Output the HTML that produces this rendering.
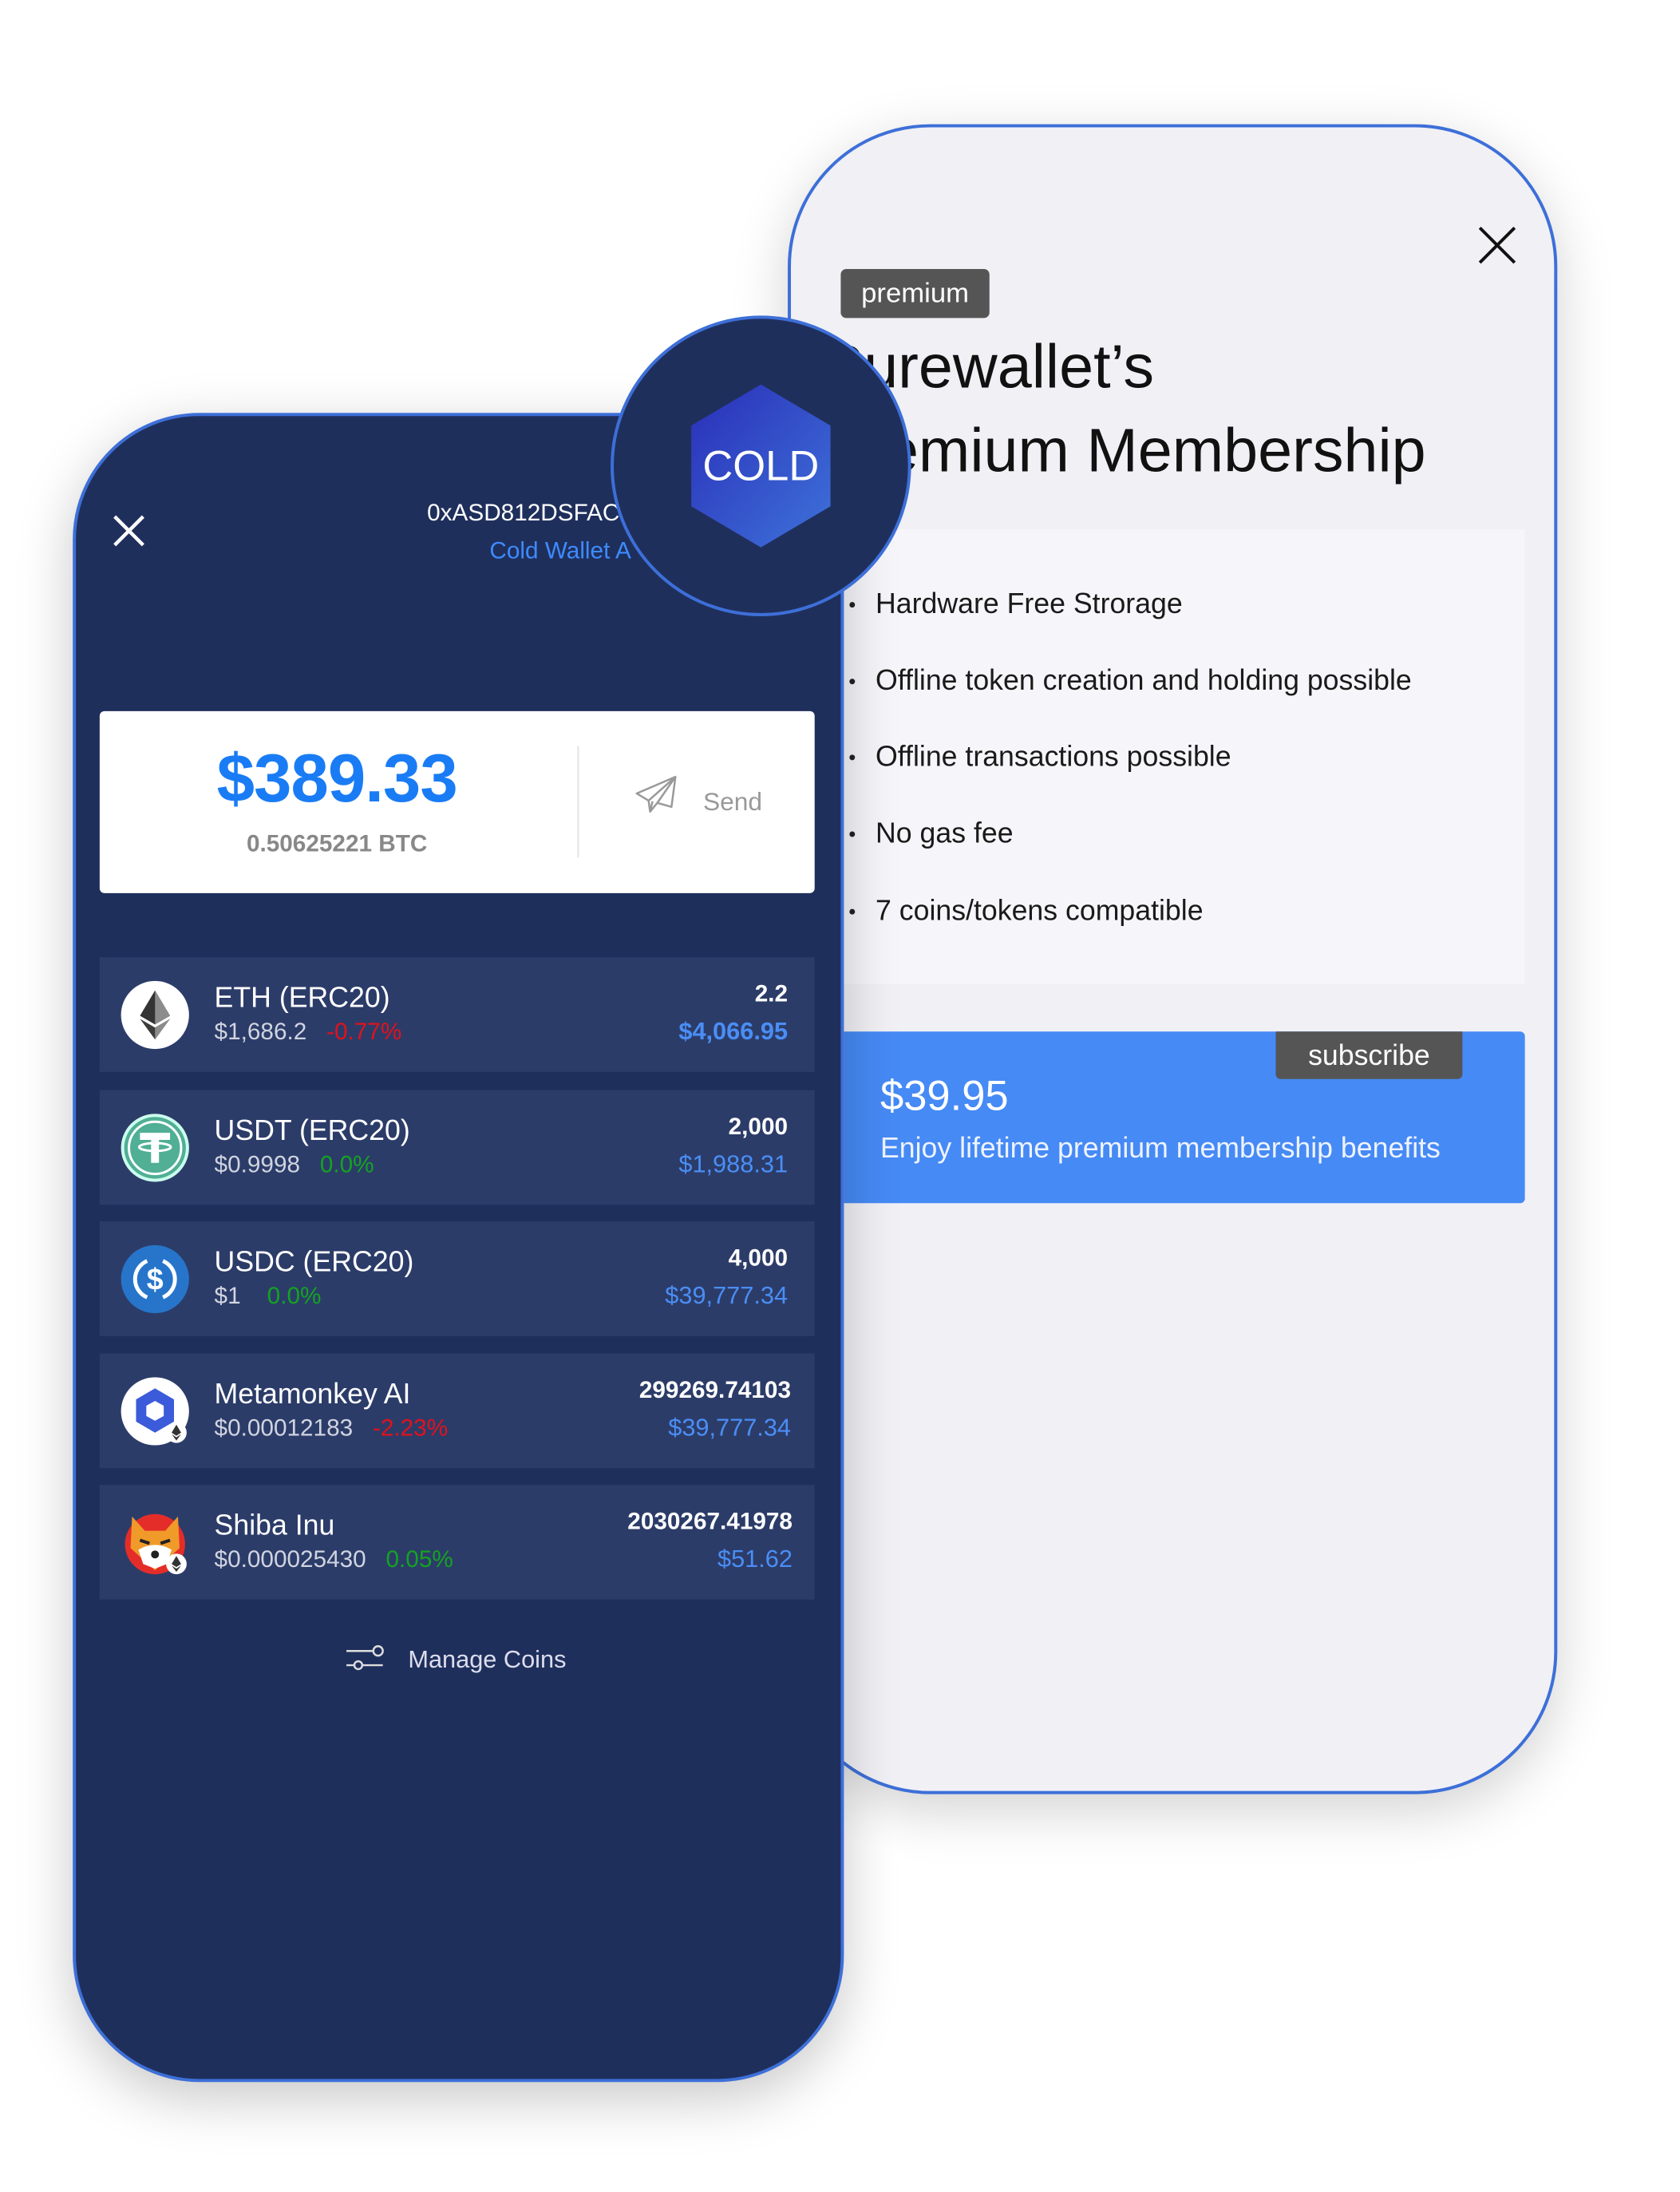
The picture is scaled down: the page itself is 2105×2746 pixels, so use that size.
<!DOCTYPE html>
<html><head><meta charset="utf-8"><style>
*{margin:0;padding:0;box-sizing:border-box}
body{width:2105px;height:2746px;background:#fff;position:relative;overflow:hidden;font-family:"Liberation Sans",Arial,sans-serif}
#w{position:absolute;left:0;top:0;width:2105px;height:2746px;transform:scale(0.991);transform-origin:0 0}
.abs{position:absolute}
.rp{left:996px;top:157px;width:973px;height:2111px;background:#f0f0f5;border:4px solid #3d6fd8;border-radius:180px;box-shadow:0 20px 70px rgba(0,0,0,.18)}
.lp{left:92px;top:522px;width:975px;height:2110px;background:#1f2f5c;border:4px solid #3d6fd8;border-radius:160px;box-shadow:0 20px 70px rgba(0,0,0,.22)}
.row{left:126px;width:904px;height:145px;background:#2c3c69}
.name{left:145px;font-size:36px;color:#fff}
.sub{left:145px;font-size:30px;color:#d0d4e0;white-space:nowrap}
.amt{right:34px;font-size:30px;color:#fff;font-weight:bold;text-align:right}
.val{right:34px;font-size:31px;color:#4a8ef5;text-align:right}
.ic{left:27px;top:30px;width:86px;height:86px;border-radius:50%}
.li{left:1107px;font-size:36px;color:#1a1a1a}
.bul{left:1074px;width:7px;height:7px;border-radius:50%;background:#222}
</style></head><body><div id="w">

<div class="abs rp"></div>
<svg class="abs" style="left:1868px;top:285px" width="50" height="50" viewBox="0 0 50 50"><path d="M3 3L47 47M47 3L3 47" stroke="#111" stroke-width="4"/></svg>
<div class="abs" style="left:1063px;top:340px;width:188px;height:62px;background:#555;border-radius:7px;color:#fff;font-size:35px;line-height:62px;text-align:center">premium</div>
<div class="abs" style="left:1040px;top:410px;font-size:78px;font-weight:500;color:#111;line-height:106px;white-space:nowrap">Purewallet’s<br>Premium Membership</div>
<div class="abs" style="left:1067px;top:669px;width:861px;height:575px;background:#f6f6fa"></div>
<div class="abs bul" style="top:761px"></div><div class="abs li" style="top:742px">Hardware Free Strorage</div>
<div class="abs bul" style="top:858px"></div><div class="abs li" style="top:839px">Offline token creation and holding possible</div>
<div class="abs bul" style="top:954px"></div><div class="abs li" style="top:935px">Offline transactions possible</div>
<div class="abs bul" style="top:1051px"></div><div class="abs li" style="top:1032px">No gas fee</div>
<div class="abs bul" style="top:1149px"></div><div class="abs li" style="top:1130px">7 coins/tokens compatible</div>
<div class="abs" style="left:1067px;top:1304px;width:861px;height:217px;background:#468af5;border-radius:0 6px 6px 0"></div>
<div class="abs" style="left:1613px;top:1304px;width:236px;height:60px;background:#555;border-radius:0 0 6px 6px;color:#fff;font-size:36px;line-height:60px;text-align:center">subscribe</div>
<div class="abs" style="left:1113px;top:1355px;font-size:53px;color:#fff">$39.95</div>
<div class="abs" style="left:1113px;top:1430px;font-size:36px;color:#eef3ff">Enjoy lifetime premium membership benefits</div>

<div class="abs lp"></div>
<svg class="abs" style="left:142px;top:650px" width="42" height="42" viewBox="0 0 42 42"><path d="M3 3L39 39M39 3L3 39" stroke="#fff" stroke-width="4.5"/></svg>
<div class="abs" style="left:540px;top:632px;font-size:30px;color:#fff">0xASD812DSFAC</div>
<div class="abs" style="left:619px;top:680px;font-size:30px;color:#3d8bff">Cold Wallet A</div>

<div class="abs" style="left:126px;top:899px;width:904px;height:230px;background:#fff;border-radius:6px"></div>
<div class="abs" style="left:126px;top:935px;width:600px;text-align:center;font-size:86px;font-weight:bold;color:#1a7cf5;letter-spacing:-1px">$389.33</div>
<div class="abs" style="left:126px;top:1050px;width:600px;text-align:center;font-size:30px;font-weight:bold;color:#888">0.50625221 BTC</div>
<div class="abs" style="left:730px;top:943px;width:2px;height:141px;background:#e3e3e3"></div>
<svg class="abs" style="left:803px;top:980px" width="54" height="48" viewBox="0 0 54 48"><path d="M2 23L51 2L46 40L28 35L19 46L17 32ZM17 32L51 2M28 35L51 2M19 46L22 33" fill="none" stroke="#999" stroke-width="2.5" stroke-linejoin="round"/></svg>
<div class="abs" style="left:889px;top:995px;font-size:32px;color:#999">Send</div>

<div class="abs row" style="top:1210px">
 <div class="abs ic" style="background:#fff"><svg width="86" height="86" viewBox="0 0 86 86"><path d="M43 12L24 44L43 55L62 44Z" fill="#343434"/><path d="M43 12L43 55L62 44Z" fill="#8c8c8c"/><path d="M24 48L43 74L62 48L43 59Z" fill="#3c3c3b"/><path d="M43 59L43 74L62 48Z" fill="#8c8c8c"/></svg></div>
 <div class="abs name" style="top:30px">ETH (ERC20)</div>
 <div class="abs sub" style="top:78px">$1,686.2 &nbsp;&nbsp;<span style="color:#e0121c">-0.77%</span></div>
 <div class="abs amt" style="top:30px">2.2</div><div class="abs val" style="top:76px;font-weight:bold">$4,066.95</div>
</div>
<div class="abs row" style="top:1378px">
 <div class="abs ic" style="background:#50af95;border:4px solid #cfe;"><svg width="78" height="78" viewBox="0 0 78 78"><circle cx="39" cy="39" r="33" fill="none" stroke="#fff" stroke-width="3"/><path d="M20 20H58V29H44V58H34V29H20Z" fill="#fff"/><ellipse cx="39" cy="38" rx="20" ry="5" fill="none" stroke="#fff" stroke-width="3"/></svg></div>
 <div class="abs name" style="top:30px">USDT (ERC20)</div>
 <div class="abs sub" style="top:78px">$0.9998 &nbsp;&nbsp;<span style="color:#13a321">0.0%</span></div>
 <div class="abs amt" style="top:30px">2,000</div><div class="abs val" style="top:76px">$1,988.31</div>
</div>
<div class="abs row" style="top:1544px">
 <div class="abs ic" style="background:#2775ca"><svg width="86" height="86" viewBox="0 0 86 86"><path d="M33 20A25 25 0 0 0 33 66M53 20A25 25 0 0 1 53 66" fill="none" stroke="#fff" stroke-width="5"/><text x="43" y="56" font-size="38" font-weight="bold" fill="#fff" text-anchor="middle" font-family="Liberation Sans">$</text></svg></div>
 <div class="abs name" style="top:30px">USDC (ERC20)</div>
 <div class="abs sub" style="top:78px">$1 &nbsp;&nbsp;&nbsp;<span style="color:#13a321">0.0%</span></div>
 <div class="abs amt" style="top:30px">4,000</div><div class="abs val" style="top:76px">$39,777.34</div>
</div>
<div class="abs row" style="top:1711px">
 <div class="abs ic" style="background:#fff"><svg width="86" height="86" viewBox="0 0 86 86"><path d="M43 14L67 28V56L43 70L19 56V28Z" fill="#3b5bdb"/><path d="M43 30L54 36V49L43 55L32 49V36Z" fill="#fff"/><circle cx="70" cy="70" r="13" fill="#fff"/><path d="M70 60L64 70L70 74L76 70Z M64 72L70 80L76 72L70 76Z" fill="#333"/></svg></div>
 <div class="abs name" style="top:30px">Metamonkey AI</div>
 <div class="abs sub" style="top:78px">$0.00012183 &nbsp;&nbsp;<span style="color:#e0121c">-2.23%</span></div>
 <div class="abs amt" style="top:30px;right:30px">299269.74103</div><div class="abs val" style="top:76px;right:30px">$39,777.34</div>
</div>
<div class="abs row" style="top:1877px">
 <div class="abs ic" style="background:transparent"><svg width="86" height="86" viewBox="0 0 86 86"><circle cx="43" cy="45" r="38" fill="#e42d28"/><path d="M14 10L30 28L56 28L72 10L74 50L43 78L12 50Z" fill="#f09a2a"/><path d="M22 52Q43 40 64 52L58 70L43 76L28 70Z" fill="#fff"/><path d="M24 40L36 44M62 40L50 44" stroke="#222" stroke-width="4"/><circle cx="43" cy="58" r="5" fill="#222"/><circle cx="70" cy="70" r="13" fill="#fff"/><path d="M70 60L64 70L70 74L76 70Z M64 72L70 80L76 72L70 76Z" fill="#333"/></svg></div>
 <div class="abs name" style="top:30px">Shiba Inu</div>
 <div class="abs sub" style="top:78px">$0.000025430 &nbsp;&nbsp;<span style="color:#13a321">0.05%</span></div>
 <div class="abs amt" style="top:30px;right:28px">2030267.41978</div><div class="abs val" style="top:76px;right:28px">$51.62</div>
</div>

<svg class="abs" style="left:436px;top:2075px" width="50" height="42" viewBox="0 0 50 42"><path d="M2 12H36M2 30H12M22 30H48" stroke="#ddd" stroke-width="2.5" fill="none"/><circle cx="42" cy="12" r="6" fill="none" stroke="#ddd" stroke-width="2.5"/><circle cx="17" cy="30" r="5" fill="none" stroke="#ddd" stroke-width="2.5"/></svg>
<div class="abs" style="left:516px;top:2080px;font-size:31px;color:#dde">Manage Coins</div>

<div class="abs" style="left:772px;top:399px;width:380px;height:380px;border-radius:50%;background:#1f2f5c;border:4px solid #3d6fd8"></div>
<svg class="abs" style="left:872px;top:484px" width="180" height="210" viewBox="0 0 180 210"><defs><linearGradient id="g" x1="0" y1="0" x2="1" y2="1"><stop offset="0" stop-color="#2a2fb8"/><stop offset="1" stop-color="#3e72da"/></linearGradient></defs><path d="M90 2L178 54V156L90 208L2 156V54Z" fill="url(#g)"/><text x="90" y="123" font-size="53" fill="#fff" text-anchor="middle" font-family="Liberation Sans">COLD</text></svg>
</div></body></html>
